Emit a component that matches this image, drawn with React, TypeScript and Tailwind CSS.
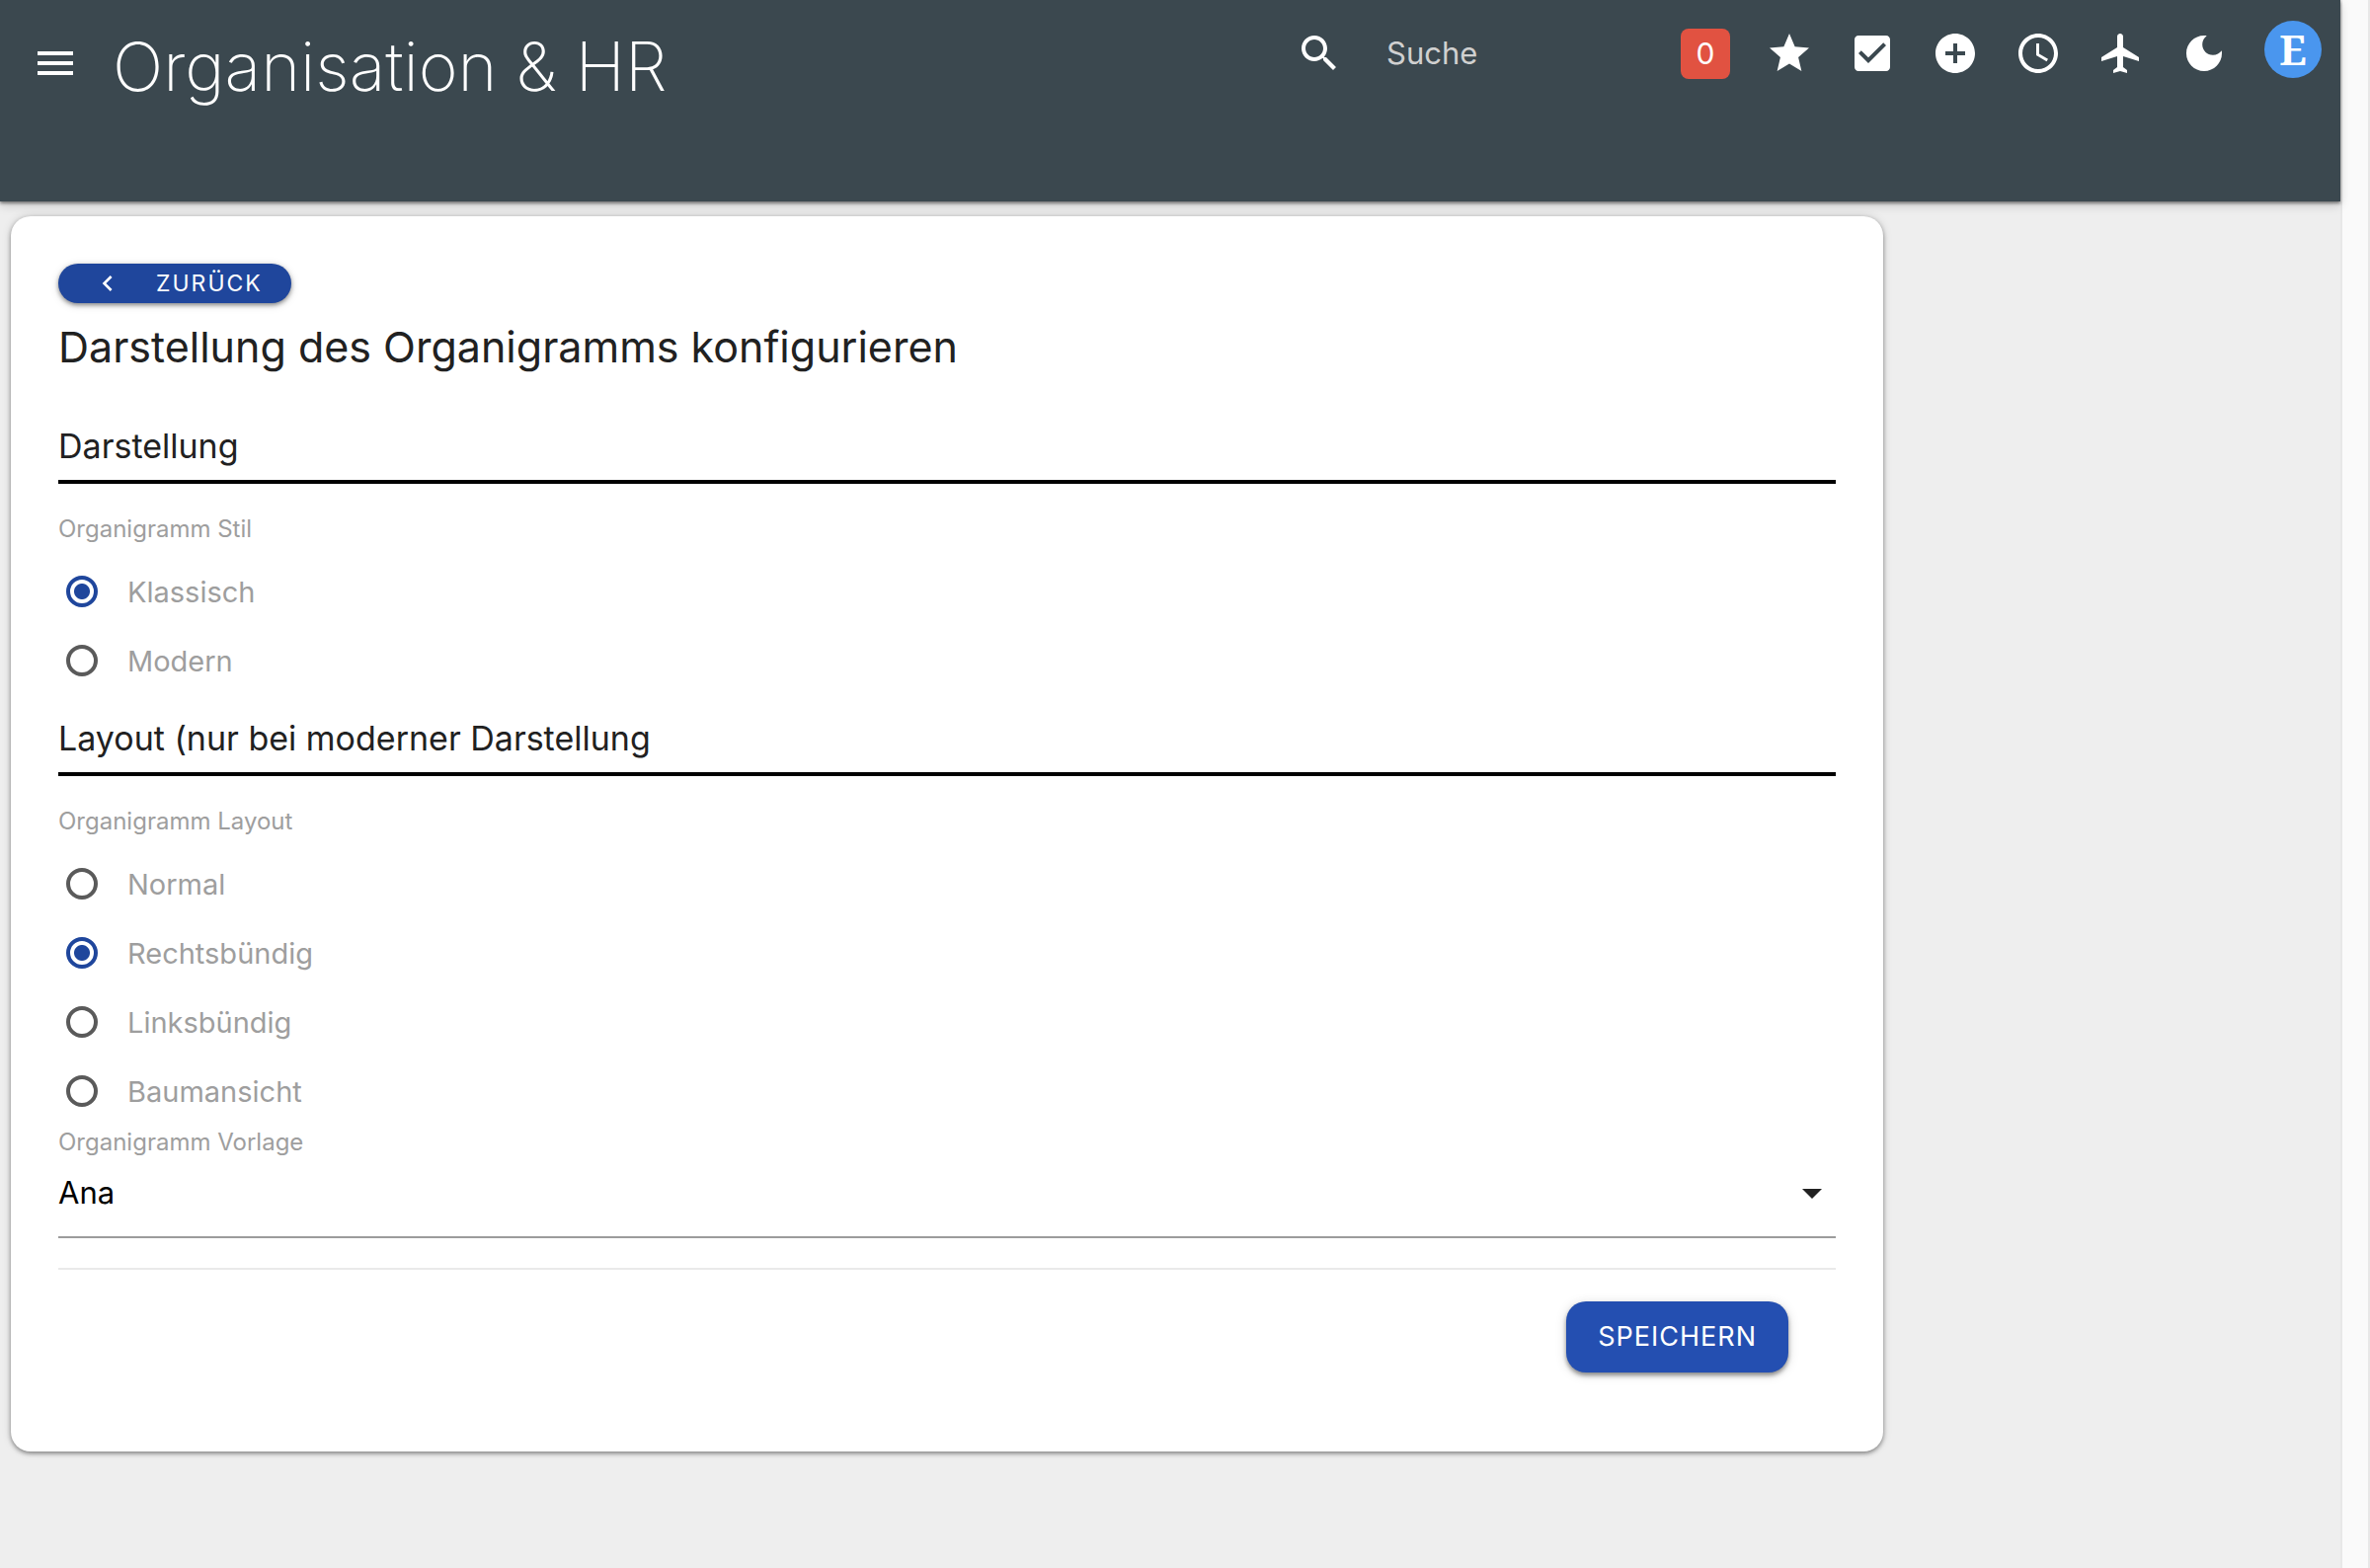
import { useState } from "react";
import type { ReactNode } from "react";

const PATHS = {
  menu: "M3 18h18v-2H3v2zm0-5h18v-2H3v2zm0-7v2h18V6H3z",
  search:
    "M15.5 14h-.79l-.28-.27C15.41 12.59 16 11.11 16 9.5 16 5.91 13.09 3 9.5 3S3 5.91 3 9.5 5.91 16 9.5 16c1.61 0 3.09-.59 4.23-1.57l.27.28v.79l5 4.99L20.49 19l-4.99-5zm-6 0C7.01 14 5 11.99 5 9.5S7.01 5 9.5 5 14 7.01 14 9.5 11.99 14 9.5 14z",
  star: "M12 17.27L18.18 21l-1.64-7.03L22 9.24l-7.19-.61L12 2 9.19 8.63 2 9.24l5.46 4.73L5.82 21z",
  checkBox:
    "M19 3H5c-1.11 0-2 .9-2 2v14c0 1.1.89 2 2 2h14c1.11 0 2-.9 2-2V5c0-1.1-.89-2-2-2zm-9 14l-5-5 1.41-1.41L10 14.17l7.59-7.59L19 8l-9 9z",
  add: "M12 2C6.48 2 2 6.48 2 12s4.48 10 10 10 10-4.48 10-10S17.52 2 12 2zm5 11h-4v4h-2v-4H7v-2h4V7h2v4h4v2z",
  clock:
    "M11.99 2C6.47 2 2 6.48 2 12s4.47 10 9.99 10C17.52 22 22 17.52 22 12S17.52 2 11.99 2zM12 20c-4.42 0-8-3.58-8-8s3.58-8 8-8 8 3.58 8 8-3.58 8-8 8zm.5-13H11v6l5.25 3.15.75-1.23-4.5-2.67z",
  plane:
    "M21 16v-2l-8-5V3.5c0-.83-.67-1.5-1.5-1.5S10 2.67 10 3.5V9l-8 5v2l8-2.5V19l-2 1.5V22l3.5-1 3.5 1v-1.5L13 19v-5.5l8 2.5z",
  moon: "M12 3c-4.97 0-9 4.03-9 9s4.03 9 9 9 9-4.03 9-9c0-.46-.04-.92-.1-1.36-.98 1.37-2.58 2.26-4.4 2.26-2.98 0-5.4-2.42-5.4-5.4 0-1.81.89-3.42 2.26-4.4-.44-.06-.9-.1-1.36-.1z",
  chevronLeft: "M15.41 7.41L14 6l-6 6 6 6 1.41-1.41L10.83 12z",
};

function Icon({ name, className = "size-12" }: { name: keyof typeof PATHS; className?: string }) {
  return (
    <svg viewBox="0 0 24 24" fill="currentColor" className={className} aria-hidden="true">
      <path d={PATHS[name]} />
    </svg>
  );
}

function IconButton({ name, label }: { name: keyof typeof PATHS; label: string }) {
  return (
    <button type="button" aria-label={label} className="shrink-0">
      <Icon name={name} />
    </button>
  );
}

function Header() {
  return (
    <header className="relative flex h-[204px] items-start justify-between bg-[#3b484f] pt-5 pr-[19px] pl-8 text-white shadow-[0_2px_3px_rgba(0,0,0,0.45),0_4px_10px_rgba(0,0,0,0.15)]">
      <div className="flex items-start gap-[34px]">
        <div className="flex h-[88px] items-center">
          <IconButton name="menu" label="Menü" />
        </div>
        <h1 className="text-[68px] leading-[94px] font-extralight">Organisation &amp; HR</h1>
      </div>
      <div className="flex items-center pt-px">
        <label className="flex items-center gap-11">
          <Icon name="search" />
          <input
            type="search"
            placeholder="Suche"
            aria-label="Suche"
            className="w-[298px] bg-transparent text-[31px] leading-[48px] outline-none placeholder:text-[#d0d0d0] placeholder:opacity-100"
          />
        </label>
        <div className="flex items-center gap-9">
          <button type="button" aria-label="Benachrichtigungen" className="h-[51px] w-[50px] rounded-lg bg-[#e15241] text-[30px] leading-[50px]">
            0
          </button>
          <IconButton name="star" label="Favoriten" />
          <IconButton name="checkBox" label="Aufgaben" />
          <IconButton name="add" label="Hinzufügen" />
          <IconButton name="clock" label="Zeiterfassung" />
          <IconButton name="plane" label="Abwesenheit" />
          <IconButton name="moon" label="Dunkelmodus" />
          <button
            type="button"
            aria-label="Profil"
            className="mb-2 ml-px size-[58px] rounded-full bg-[#4a96ee] font-['Noto_Serif','DejaVu_Serif',serif] text-[42px] leading-[56px] font-bold"
          >
            E
          </button>
        </div>
      </div>
    </header>
  );
}

function SectionTitle({ children }: { children: ReactNode }) {
  return <h3 className="border-b-4 border-black pb-2.5 text-[34px] leading-[48px]">{children}</h3>;
}

function RadioGroup({ legend, name, options, initial }: { legend: string; name: string; options: string[]; initial: string }) {
  const [value, setValue] = useState(initial);
  return (
    <fieldset className="mt-[30px] text-[#9e9e9e]">
      <legend className="mb-3 text-[24px] leading-8">{legend}</legend>
      {options.map((option) => (
        <label key={option} className="flex h-[70px] items-center gap-[30px] pl-2">
          <input
            type="radio"
            name={name}
            checked={value === option}
            onChange={() => setValue(option)}
            className="size-8 appearance-none rounded-full border-4 border-[#5a5a5a] checked:border-[#1f469c] checked:bg-[radial-gradient(circle,#1f469c_7.5px,transparent_8.5px)]"
          />
          <span className="pt-0.5 text-[29px] leading-10">{option}</span>
        </label>
      ))}
    </fieldset>
  );
}

export default function App() {
  return (
    <div className="flex min-h-screen bg-[#eeeeee] font-['Inter',sans-serif] text-[#212121]">
      <div className="min-w-0 flex-1">
        <Header />
        <main className="mt-[15px]">
          <form
            onSubmit={(event) => event.preventDefault()}
            className="ml-[11px] w-4/5 rounded-[20px] bg-white p-12 shadow-[0_2px_4px_rgba(0,0,0,0.4),0_0_10px_rgba(0,0,0,0.15)]"
          >
            <button
              type="button"
              className="flex h-10 items-center gap-[33px] rounded-full bg-[#1f469c] pr-[29px] pl-[34px] text-[23px] leading-8 tracking-[2px] text-white shadow-[0_2px_4px_rgba(0,0,0,0.4),0_2px_10px_rgba(0,0,0,0.15)]"
            >
              <Icon name="chevronLeft" className="size-8" />
              ZURÜCK
            </button>
            <h2 className="mt-3 text-[43px] leading-[64px]">Darstellung des Organigramms konfigurieren</h2>
            <div className="mt-[45px]">
              <SectionTitle>Darstellung</SectionTitle>
              <RadioGroup legend="Organigramm Stil" name="stil" options={["Klassisch", "Modern"]} initial="Klassisch" />
            </div>
            <div className="mt-5">
              <SectionTitle>Layout (nur bei moderner Darstellung</SectionTitle>
              <RadioGroup
                legend="Organigramm Layout"
                name="layout"
                options={["Normal", "Rechtsbündig", "Linksbündig", "Baumansicht"]}
                initial="Rechtsbündig"
              />
            </div>
            <label htmlFor="vorlage" className="mt-px block text-[24px] leading-8 text-[#9e9e9e]">
              Organigramm Vorlage
            </label>
            <div className="grid items-center">
              <select
                id="vorlage"
                className="col-start-1 row-start-1 h-[81px] w-full appearance-none border-b-2 border-[#9b9b9b] bg-transparent pb-2 text-[31px] text-black outline-none"
              >
                <option>Ana</option>
              </select>
              <svg
                viewBox="0 0 20 10"
                fill="currentColor"
                className="pointer-events-none col-start-1 row-start-1 mr-3.5 mb-2.5 h-2.5 w-5 justify-self-end"
                aria-hidden="true"
              >
                <path d="M0 0h20L10 10z" />
              </svg>
            </div>
            <hr className="mt-[30px] border-t-2 border-[#eaeaea]" />
            <div className="mt-8 mr-12 mb-8 flex justify-end">
              <button
                type="submit"
                className="h-[72px] rounded-[20px] bg-[#244fb1] px-8 text-[27px] leading-10 tracking-[1px] text-white shadow-[0_3px_4px_rgba(0,0,0,0.4),0_2px_12px_rgba(0,0,0,0.15)]"
              >
                SPEICHERN
              </button>
            </div>
          </form>
        </main>
      </div>
      <div className="w-[30px] shrink-0 border-x-2 border-[#e8e8e8] bg-[#fafafa]" />
    </div>
  );
}
